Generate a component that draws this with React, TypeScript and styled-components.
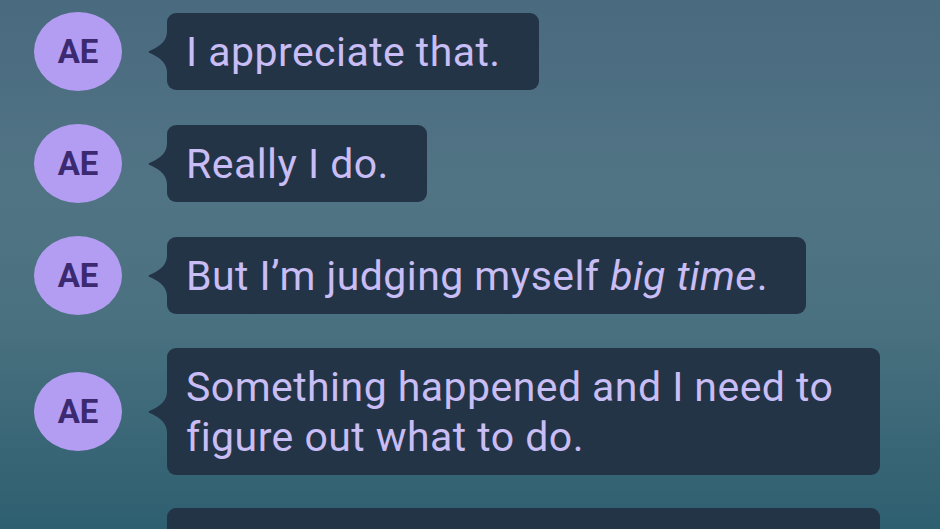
import React from "react";
import styled, { createGlobalStyle } from "styled-components";

const GlobalStyle = createGlobalStyle`
  html, body {
    margin: 0;
    padding: 0;
    height: 100%;
    overflow: hidden;
  }
  body {
    font-family: Roboto, "Liberation Sans", sans-serif;
  }
`;

const Screen = styled.div`
  width: 940px;
  height: 529px;
  overflow: hidden;
  background: linear-gradient(
    180deg,
    #4a6a7f 0%,
    #517485 35%,
    #4a7180 60%,
    #2e5f70 100%
  );
  padding: 12px 0 0 34px;
  box-sizing: border-box;
  display: flex;
  flex-direction: column;
  gap: 33px;
`;

const Row = styled.div`
  display: flex;
  align-items: center;
`;

const Avatar = styled.div`
  flex: none;
  width: 88px;
  height: 79px;
  border-radius: 50%;
  background: #b39df3;
  color: #3b2a6f;
  font-weight: 700;
  font-size: 33px;
  display: flex;
  align-items: center;
  justify-content: center;
`;

const Tail = styled.svg`
  flex: none;
  width: 19px;
  height: 40px;
  margin-left: 26px;
  display: block;
`;

const Bubble = styled.div<{ $placeholder?: boolean }>`
  max-width: 713px;
  box-sizing: border-box;
  padding: 14px 38px 13px 19px;
  background: #243447;
  border-radius: 9px;
  color: #c8bdf4;
  font-size: 41px;
  line-height: 50px;
  letter-spacing: 0.45px;
  font-variant-ligatures: none;
  ${({ $placeholder }) => $placeholder && "width: 713px; min-height: 127px;"}
  em {
    font-style: italic;
  }
`;

type Message = {
  from: string;
  body?: React.ReactNode;
};

const messages: Message[] = [
  { from: "AE", body: "I appreciate that." },
  { from: "AE", body: "Really I do." },
  {
    from: "AE",
    body: (
      <>
        But I’m judging myself <em>big time</em>.
      </>
    ),
  },
  { from: "AE", body: "Something happened and I need to figure out what to do." },
  { from: "AE" },
];

const BubbleTail = () => (
  <Tail viewBox="0 0 19 40">
    <path d="M19 0 C19 10 9 16 1 19.2 Q0 20 1 20.8 C9 24 19 30 19 40 Z" fill="#243447" />
  </Tail>
);

export default function App() {
  return (
    <>
      <GlobalStyle />
      <Screen>
        {messages.map((m, i) => (
          <Row key={i}>
            <Avatar>{m.body ? m.from : null}</Avatar>
            <BubbleTail />
            <Bubble $placeholder={!m.body}>{m.body}</Bubble>
          </Row>
        ))}
      </Screen>
    </>
  );
}
